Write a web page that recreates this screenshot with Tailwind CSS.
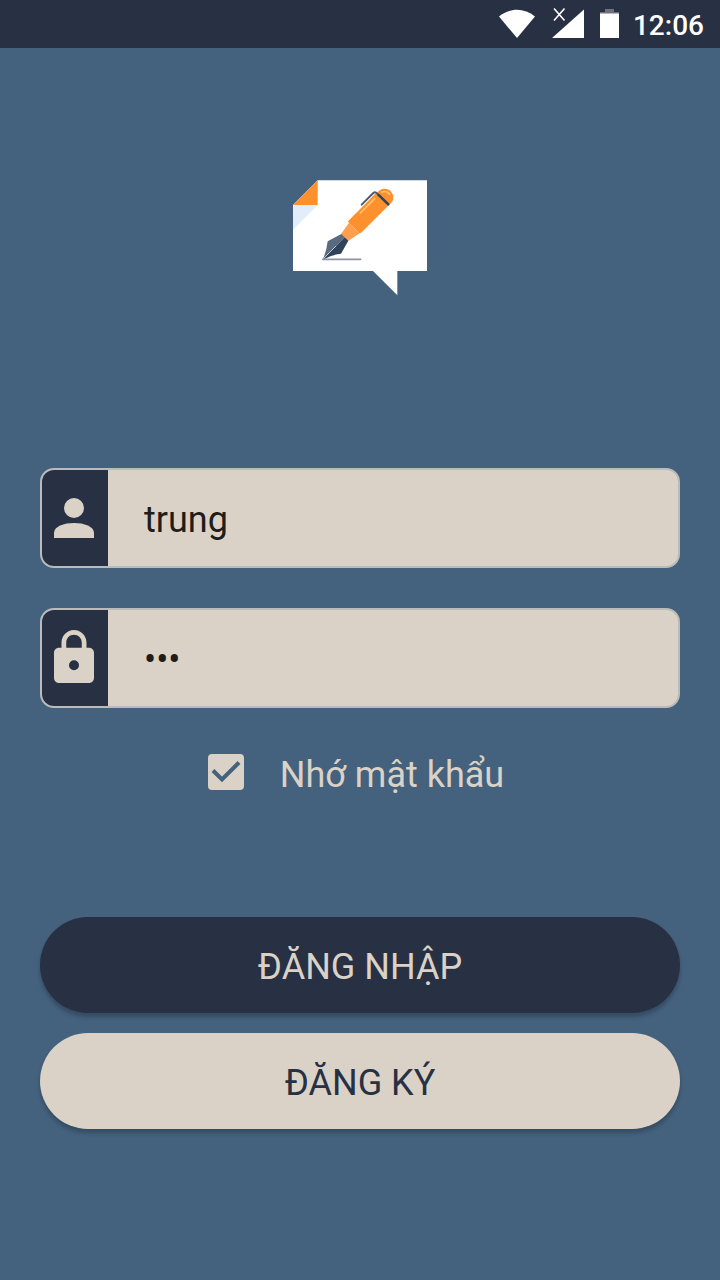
<!DOCTYPE html>
<html lang="vi">
<head>
<meta charset="utf-8">
<meta name="viewport" content="width=device-width, initial-scale=1">
<title>Đăng nhập</title>
<script src="https://cdn.jsdelivr.net/npm/@tailwindcss/browser@4"></script>
</head>
<body class="flex min-h-screen flex-col bg-[#44617d] font-['Roboto',sans-serif] text-4xl text-[#dad2c7]">
  <header class="flex h-12 items-center justify-end bg-[#283043] pr-4 text-white">
    <svg class="mr-4 h-12 w-[38px]" viewBox="0 0 38 48" fill="#fff" aria-label="Wi-Fi"><path d="M1 16.500C12 7.500 26 7.500 37 16.500L19 38Z"/></svg>
    <svg class="mr-4 h-12 w-8" viewBox="0 0 32 48" aria-label="Sóng di động"><path d="M0 38L32 9.500V38Z" fill="#fff"/><path d="M2 8.500L12.500 20.500M12.500 8.500L2 20.500" stroke="#fff" stroke-width="1.600"/></svg>
    <svg class="mr-[13px] h-12 w-5" viewBox="0 0 20 48" aria-label="Pin"><path d="M5 9H14V12H19V14H0V12H5Z" fill="#6c7280"/><path d="M0 13.500H19V38H0Z" fill="#fff"/></svg>
    <time class="pt-1 text-[28px] leading-8 font-medium">12:06</time>
  </header>

  <main class="flex flex-col px-10 pt-[122px]">
    <svg class="h-[135px] w-40 self-center" viewBox="0 0 480 405" role="img" aria-label="Logo">
      <path d="M113 31H441V303H352V376L279 303H39V105Z" fill="#fff"/>
      <path d="M39 105H113L39 179Z" fill="#e1edfa"/>
      <path d="M113 31V105H39Z" fill="#ff902e"/>
      <path d="M289 72C300 52 323 52 334 66C344 79 342 94 327 105Z" fill="#ff902e"/>
      <path d="M306 66Q320 61 328 72" fill="none" stroke="#ffc56f" stroke-width="5" stroke-linecap="round"/>
      <path d="M288 69L327 105L242 190L204 154Z" fill="#ff902e"/>
      <path d="M241 129L284 86" stroke="#ffc56f" stroke-width="5" stroke-linecap="round"/>
      <path d="M207 158L239 190L204 213L183 192Z" fill="#ff9f4e"/>
      <path d="M205 155L240 189" stroke="#f5862b" stroke-width="3"/>
      <path d="M245 104L280 69Q286 64 292 71L326 104" fill="none" stroke="#4c5c70" stroke-width="6" stroke-linejoin="round" stroke-linecap="round"/>
      <path d="M294 73L326 104" stroke="#31435a" stroke-width="7"/>
      <path d="M184 192L194 202L128 269Q140 242 143 214Z" fill="#596b80"/>
      <path d="M194 202L205 212L183 251Q156 254 128 269Z" fill="#31435a"/>
      <path d="M131 265L167 229" stroke="#c3cad3" stroke-width="3" stroke-linecap="round"/>
      <path d="M128 268H242" stroke="#8b94a5" stroke-width="5" stroke-linecap="round"/>
    </svg>

    <form class="mt-[163px] flex flex-col">
      <div class="flex h-[100px] overflow-hidden rounded-[14px] border-2 border-[#bbb] bg-[#dad2c7]">
        <label for="username" class="flex w-[66px] shrink-0 items-center justify-center bg-[#283043] pr-0.5" aria-label="Tên đăng nhập">
          <svg class="h-10 w-10" viewBox="0 0 40 40" fill="#dad2c7"><circle cx="20" cy="10" r="10"/><path d="M0 40V35C0 28.300 10 25 20 25S40 28.300 40 35V40Z"/></svg>
        </label>
        <input id="username" type="text" value="trung" class="min-w-0 flex-1 bg-transparent px-9 pt-1 text-[#1e1d1b] outline-none">
      </div>
      <div class="mt-10 flex h-[100px] overflow-hidden rounded-[14px] border-2 border-[#bbb] bg-[#dad2c7]">
        <label for="password" class="flex w-[66px] shrink-0 justify-center bg-[#283043] pt-5 pr-0.5" aria-label="Mật khẩu">
          <svg class="h-[53px] w-10" viewBox="0 0 40 53" fill="#dad2c7"><path fill-rule="evenodd" d="M35 17.700H32.500V12.500C32.500 5.600 26.900 0 20 0S7.500 5.600 7.500 12.500V17.700H5C2.200 17.700 0 20 0 22.700V48C0 50.800 2.200 53 5 53H35C37.800 53 40 50.800 40 48V22.700C40 20 37.800 17.700 35 17.700ZM12.250 17.700V12.500C12.250 8.200 15.700 4.750 20 4.750S27.750 8.200 27.750 12.500V17.700ZM20 40.300A5 5 0 1 1 20 30.300A5 5 0 0 1 20 40.300Z"/></svg>
        </label>
        <input id="password" type="password" value="123" class="min-w-0 flex-1 bg-transparent px-9 pt-1 text-[#1e1d1b] outline-none">
      </div>

      <div class="mt-10 flex h-12 items-center justify-center pr-2">
        <span class="grid">
          <input id="remember" type="checkbox" checked class="peer col-start-1 row-start-1 size-9 appearance-none rounded-sm border-4 border-[#dad2c7] checked:bg-[#dad2c7]">
          <svg class="pointer-events-none invisible col-start-1 row-start-1 size-9 peer-checked:visible" viewBox="0 0 36 36" fill="none" stroke="#44617d" stroke-width="4"><path d="M5 16.500L14 25.500L31 8.500"/></svg>
        </span>
        <label for="remember" class="pt-1.5 pl-9">Nhớ mật khẩu</label>
      </div>

      <button type="submit" class="mt-[121px] h-24 rounded-full bg-[#283043] pt-1 shadow-[0_4px_4px_rgba(0,0,0,0.22)]">ĐĂNG NHẬP</button>
      <button type="button" class="mt-5 h-24 rounded-full bg-[#dad2c7] pt-1 text-[#283043] shadow-[0_4px_4px_rgba(0,0,0,0.22)]">ĐĂNG KÝ</button>
    </form>
  </main>
</body>
</html>
